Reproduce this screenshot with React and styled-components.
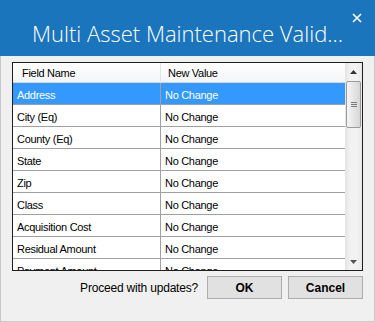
import React from 'react';
import styled, { createGlobalStyle } from 'styled-components';

const Global = createGlobalStyle`
  html, body { margin: 0; padding: 0; background: #fff; }
  body { font-family: "Liberation Sans", Arial, sans-serif; }
  * { box-sizing: border-box; }
`;

const Window = styled.div`
  width: 375px;
  height: 322px;
  display: flex;
  flex-direction: column;
  background: #f0f0f0;
`;

const TitleBar = styled.div`
  position: relative;
  height: 56px;
  flex: none;
  background: #1a75bd;
  display: flex;
  align-items: center;
  justify-content: center;
`;

const Title = styled.h1`
  margin: 0;
  padding-top: 9px;
  font-family: "Open Sans", "Noto Sans", sans-serif;
  font-weight: 300;
  font-size: 22px;
  color: #fff;
  white-space: nowrap;
`;

const CloseButton = styled.button`
  position: absolute;
  top: 12px;
  right: 13px;
  width: 11px;
  height: 11px;
  padding: 0;
  border: none;
  background: transparent;
  display: flex;
  align-items: center;
  justify-content: center;
`;

const Body = styled.div`
  flex: 1;
  display: flex;
  flex-direction: column;
  border: 1px solid #c9c9c9;
  border-top: none;
  padding: 6px 11px 0 11px;
`;

const Grid = styled.div`
  height: 209px;
  border: 1px solid #1e1e1e;
  background: #fff;
  display: grid;
  grid-template-columns: 1fr 17px;
  overflow: hidden;
`;

const Table = styled.div`
  display: flex;
  flex-direction: column;
  overflow: hidden;
  font-size: 11px;
  letter-spacing: -0.3px;
  color: #000;
`;

const HeaderRow = styled.div`
  flex: none;
  height: 20px;
  display: grid;
  grid-template-columns: 148px 1fr;
  border-bottom: 1px solid #d5d5d5;
  background: linear-gradient(#ffffff, #f4f5f7);
`;

const HeaderCell = styled.div`
  padding-left: ${p => p.$pad}px;
  padding-top: 1px;
  line-height: 19px;
  border-right: ${p => (p.$divider ? '1px solid #e3e3e3' : 'none')};
  white-space: nowrap;
`;

const Row = styled.div`
  flex: none;
  height: 22px;
  display: grid;
  grid-template-columns: 148px 1fr;
  border-bottom: 1px solid #a0a0a0;
  background: ${p => (p.$selected ? '#3399ff' : '#fff')};
  color: ${p => (p.$selected ? '#fff' : '#000')};
  overflow: hidden;
`;

const Cell = styled.div`
  padding-left: 4px;
  padding-top: 1px;
  line-height: 22px;
  white-space: nowrap;
  border-right: ${p => (p.$divider ? '1px solid #a0a0a0' : 'none')};
`;

const ScrollBar = styled.div`
  display: flex;
  flex-direction: column;
  background: linear-gradient(to right, #e3e3e3, #f2f2f2 30%, #f2f2f2 70%, #e8e8e8);
`;

const Arrow = styled.div`
  flex: none;
  height: 17px;
  display: flex;
  align-items: center;
  justify-content: center;
`;

const Track = styled.div`
  flex: 1;
  display: flex;
  flex-direction: column;
  padding: 1px 1px 0 1px;
`;

const Thumb = styled.div`
  height: 47px;
  border: 1px solid #9b9b9b;
  border-radius: 2px;
  background: linear-gradient(to right, #f5f5f5, #e6e6e6 50%, #d6d6d6);
  display: flex;
  flex-direction: column;
  align-items: center;
  justify-content: center;
  gap: 1px;
`;

const Grip = styled.div`
  width: 6px;
  height: 1px;
  background: #7a7a7a;
`;

const Footer = styled.div`
  margin-top: 5px;
  display: flex;
  align-items: center;
  justify-content: flex-end;
  gap: 6px;
`;

const Prompt = styled.span`
  font-size: 12px;
  letter-spacing: -0.2px;
  color: #000;
  margin-right: 3px;
`;

const Button = styled.button`
  width: 75px;
  height: 23px;
  background: #e1e1e1;
  border: 1px solid #adadad;
  font-family: "Liberation Sans", Arial, sans-serif;
  font-weight: bold;
  font-size: 12px;
  color: #000;
  padding: 0;
`;

const rows = [
  'Address',
  'City (Eq)',
  'County (Eq)',
  'State',
  'Zip',
  'Class',
  'Acquisition Cost',
  'Residual Amount',
  'Payment Amount',
];

export default function App() {
  return (
    <>
      <Global />
      <Window>
        <TitleBar>
          <Title>Multi Asset Maintenance Valid...</Title>
          <CloseButton aria-label="Close">
            <svg width="10" height="10" viewBox="0 0 10 10">
              <path d="M1 1 L9 9 M9 1 L1 9" stroke="#fff" strokeWidth="1.6" />
            </svg>
          </CloseButton>
        </TitleBar>
        <Body>
          <Grid>
            <Table>
              <HeaderRow>
                <HeaderCell $pad={9} $divider>Field Name</HeaderCell>
                <HeaderCell $pad={7}>New Value</HeaderCell>
              </HeaderRow>
              {rows.map((r, i) => (
                <Row key={r} $selected={i === 0}>
                  <Cell $divider>{r}</Cell>
                  <Cell>No Change</Cell>
                </Row>
              ))}
            </Table>
            <ScrollBar>
              <Arrow>
                <svg width="7" height="4" viewBox="0 0 7 4">
                  <path d="M3.5 0 L7 4 L0 4 Z" fill="#333" />
                </svg>
              </Arrow>
              <Track>
                <Thumb>
                  <Grip />
                  <Grip />
                  <Grip />
                </Thumb>
              </Track>
              <Arrow>
                <svg width="7" height="4" viewBox="0 0 7 4">
                  <path d="M0 0 L7 0 L3.5 4 Z" fill="#555" />
                </svg>
              </Arrow>
            </ScrollBar>
          </Grid>
          <Footer>
            <Prompt>Proceed with updates?</Prompt>
            <Button>OK</Button>
            <Button>Cancel</Button>
          </Footer>
        </Body>
      </Window>
    </>
  );
}
